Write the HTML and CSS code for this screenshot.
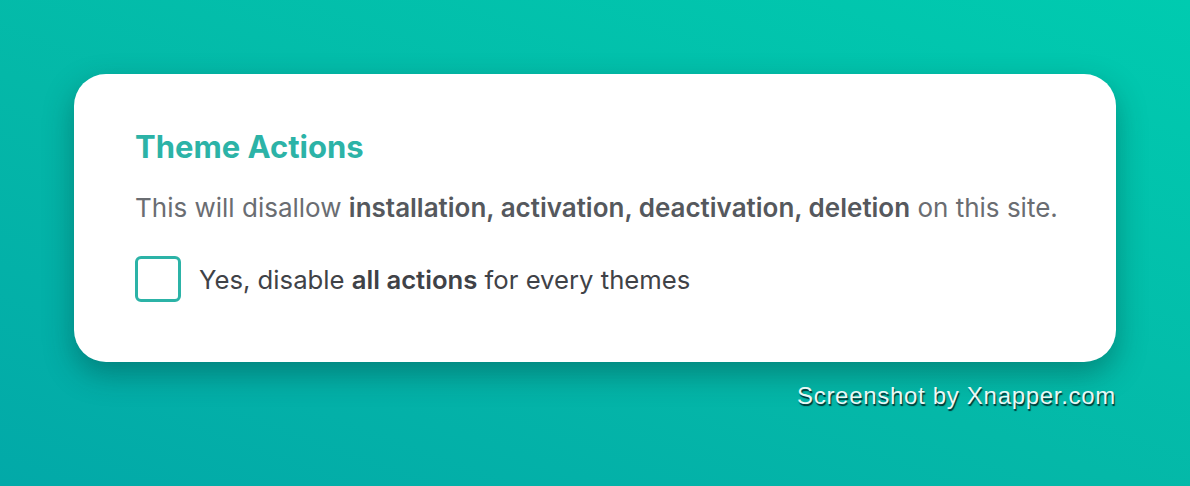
FILE: index.html
```html
<!DOCTYPE html>
<html lang="en">
<head>
  <meta charset="UTF-8" />
  <meta name="viewport" content="width=device-width, initial-scale=1.0" />
  <title>Theme Actions</title>
  <link rel="stylesheet" href="styles.css">
</head>
<body>
  <div class="frame">
    <div class="card">
      <h2 class="card-title">Theme Actions</h2>
      <p class="card-text">This will disallow <strong>installation, activation, deactivation, deletion</strong> on this site.</p>
      <label class="check-row">
        <input type="checkbox" class="check">
        <span>Yes, disable <strong>all actions</strong> for every themes</span>
      </label>
    </div>
    <div class="credit">Screenshot by Xnapper.com</div>
  </div>
</body>
</html>
```

FILE: styles.css
```css
html, body {
  margin: 0;
  padding: 0;
  height: 100%;
}

body {
  background: linear-gradient(200deg, #00cbb0 0%, #04b8a8 55%, #02a9a8 100%);
  font-family: 'Inter', 'Noto Sans', sans-serif;
}

.frame {
  padding: 74px 74px 0;
  display: flex;
  flex-direction: column;
}

.card {
  background: #fff;
  border-radius: 32px;
  box-shadow: 0 12px 30px rgba(0, 40, 40, 0.35);
  padding: 54px 40px 0 61px;
  height: 288px;
  box-sizing: border-box;
}

.card-title {
  margin: 0;
  font-size: 31px;
  font-weight: 700;
  line-height: 38px;
  color: #2cb3a7;
}

.card-text {
  margin: 26px 0 0;
  font-size: 26px;
  line-height: 32px;
  white-space: nowrap;
  color: #6a6d72;
}

.card-text strong {
  color: #55585d;
  font-weight: 600;
}

.check-row {
  margin-top: 32px;
  display: flex;
  align-items: center;
  gap: 18px;
  font-size: 25.7px;
  white-space: nowrap;
  color: #3f4247;
}

.check-row strong {
  font-weight: 600;
}

.check {
  -webkit-appearance: none;
  appearance: none;
  margin: 0;
  width: 46px;
  height: 46px;
  flex: none;
  border: 3px solid #2cb3a7;
  border-radius: 6px;
  box-sizing: border-box;
  background: #fff;
}

.credit {
  align-self: flex-end;
  margin-top: 20px;
  font-family: 'Liberation Sans', Arial, sans-serif;
  font-size: 24px;
  letter-spacing: 0.7px;
  color: #eaf8f5;
  text-shadow: 1px 2px 1px rgba(0, 35, 35, 0.9);
}
```
